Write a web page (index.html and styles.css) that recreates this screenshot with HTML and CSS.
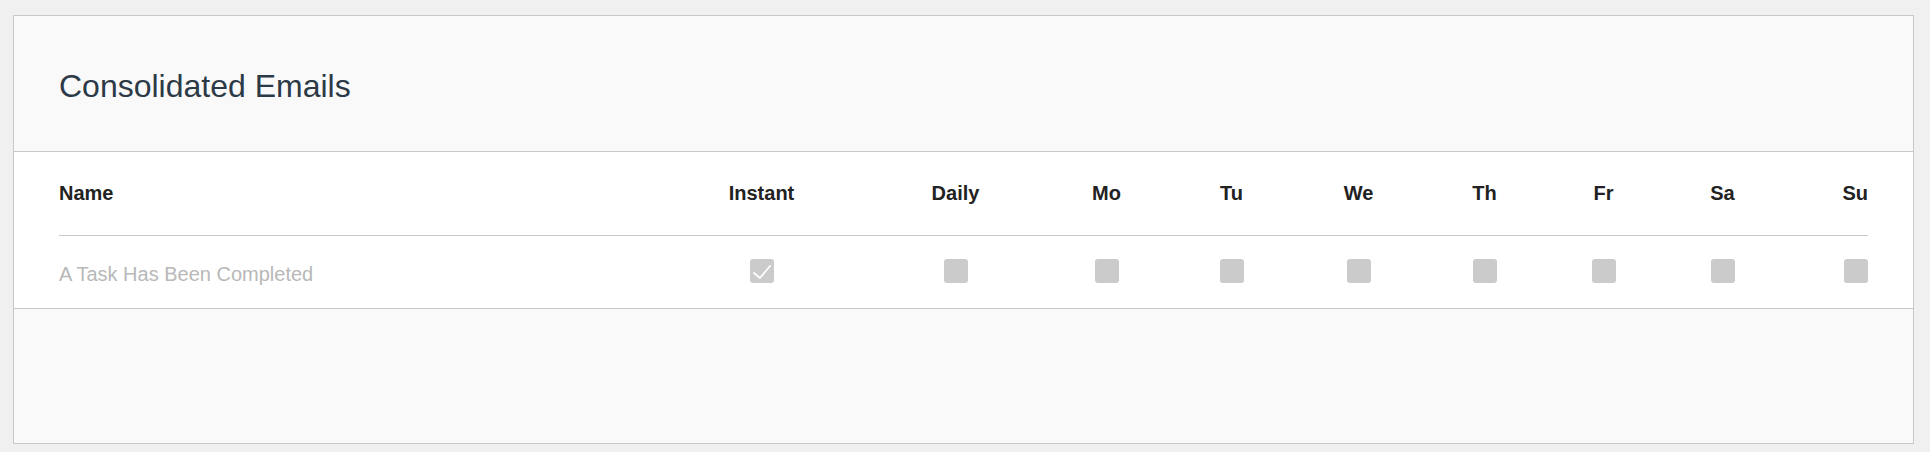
FILE: index.html
```html
<!DOCTYPE html>
<html lang="en">
<head>
    <meta charset="UTF-8">
    <meta name="viewport" content="width=device-width, initial-scale=1.0">
    <title>Consolidated Emails</title>
    <link rel="stylesheet" href="styles.css">
</head>
<body>
    <div class="panel">
        <div class="panel-header">
            <h2>Consolidated Emails</h2>
        </div>

        <div class="panel-body">
            <div class="digest-grid">
                <div class="cell head name">Name</div>
                <div class="cell head">Instant</div>
                <div class="cell head">Daily</div>
                <div class="cell head">Mo</div>
                <div class="cell head">Tu</div>
                <div class="cell head">We</div>
                <div class="cell head">Th</div>
                <div class="cell head">Fr</div>
                <div class="cell head">Sa</div>
                <div class="cell head last">Su</div>

                <div class="cell row name">A Task Has Been Completed</div>
                <div class="cell row">
                    <span class="check checked">
                        <svg viewBox="0 0 24 24" width="24" height="24"><polyline points="4,14 10,19 20,7" fill="none" stroke="#fff" stroke-width="1.8" stroke-linecap="round" stroke-linejoin="round"/></svg>
                    </span>
                </div>
                <div class="cell row"><span class="check"></span></div>
                <div class="cell row"><span class="check"></span></div>
                <div class="cell row"><span class="check"></span></div>
                <div class="cell row"><span class="check"></span></div>
                <div class="cell row"><span class="check"></span></div>
                <div class="cell row"><span class="check"></span></div>
                <div class="cell row"><span class="check"></span></div>
                <div class="cell row last"><span class="check"></span></div>
            </div>
        </div>

        <div class="panel-footer"></div>
    </div>
</body>
</html>
```

FILE: styles.css
```css
* {
    margin: 0;
    padding: 0;
    box-sizing: border-box;
}

body {
    font-family: 'Liberation Sans', Arial, sans-serif;
    background: #f0f0f0;
    margin: 15px 16px 0 13px;
}

.panel {
    border: 1px solid #c8c8c8;
    background: #f9f9f9;
}

.panel-header {
    padding: 50px 45px 45px;
    border-bottom: 1px solid #c8c8c8;
}

.panel-header h2 {
    font-size: 32px;
    font-weight: 400;
    line-height: 40px;
    color: #2c3a48;
}

.panel-body {
    background: #fff;
    padding: 29px 45px 25px;
    border-bottom: 1px solid #c8c8c8;
}

.digest-grid {
    display: grid;
    grid-template-columns: 1fr 215px 173px 129px 121px 133px 119px 119px 119px 86px;
}

.cell {
    display: flex;
    justify-content: center;
    align-items: center;
}

.cell.name {
    justify-content: flex-start;
}

.cell.last {
    justify-content: flex-end;
}

.cell.head {
    font-size: 20px;
    font-weight: 700;
    line-height: 24px;
    color: #222;
    padding-bottom: 30px;
    border-bottom: 1px solid #c8c8c8;
}

.cell.row {
    padding-top: 23px;
    height: 47px;
}

.cell.row.name {
    font-size: 20px;
    line-height: 24px;
    color: #b8b8b8;
    padding-top: 29px;
}

.check {
    display: block;
    width: 24px;
    height: 24px;
    background: #cbcbcb;
    border-radius: 3px;
}

.check svg {
    display: block;
}

.panel-footer {
    height: 134px;
}
```
